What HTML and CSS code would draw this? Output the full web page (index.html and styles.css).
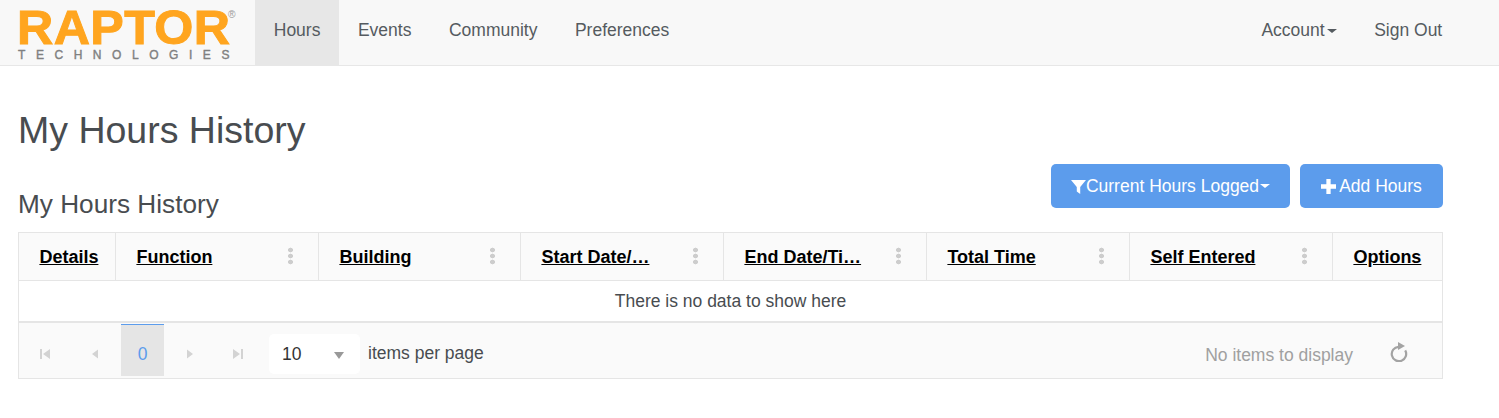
FILE: index.html
```html
<!DOCTYPE html>
<html lang="en">
<head>
    <meta charset="UTF-8">
    <meta name="viewport" content="width=device-width, initial-scale=1.0">
    <title>My Hours History</title>
    <link rel="stylesheet" href="styles.css">
</head>
<body>
    <nav class="navbar">
        <a class="brand" href="#">
            <span class="brand-name">RAPTOR<sup class="brand-reg">®</sup></span>
            <span class="brand-sub">TECHNOLOGIES</span>
        </a>
        <ul class="nav-list">
            <li><a class="active" href="#">Hours</a></li>
            <li><a href="#">Events</a></li>
            <li><a href="#">Community</a></li>
            <li><a href="#">Preferences</a></li>
        </ul>
        <ul class="nav-list nav-right">
            <li><a href="#">Account<span class="caret"></span></a></li>
            <li><a href="#">Sign Out</a></li>
        </ul>
    </nav>

    <main class="content">
        <h1>My Hours History</h1>
        <div class="toolbar">
            <h2>My Hours History</h2>
            <div class="toolbar-btns">
                <button class="btn" type="button">
                    <svg class="icon-filter" viewBox="0 0 14 14"><path d="M0 1h14L8.6 7.4V14L5.4 11.6V7.4z"/></svg>Current Hours Logged<span class="caret"></span>
                </button>
                <button class="btn btn-add" type="button">
                    <svg class="icon-plus" viewBox="0 0 14 14"><path d="M5 0h4v5h5v4H9v5H5V9H0V5h5z"/></svg>Add Hours
                </button>
            </div>
        </div>

        <div class="grid">
            <div class="grid-head">
                <div class="col col-details"><a href="#">Details</a></div>
                <div class="col"><a href="#">Function</a><span class="dots"></span></div>
                <div class="col"><a href="#">Building</a><span class="dots"></span></div>
                <div class="col"><a href="#">Start Date/…</a><span class="dots"></span></div>
                <div class="col"><a href="#">End Date/Ti…</a><span class="dots"></span></div>
                <div class="col"><a href="#">Total Time</a><span class="dots"></span></div>
                <div class="col"><a href="#">Self Entered</a><span class="dots"></span></div>
                <div class="col col-options"><a href="#">Options</a></div>
            </div>
            <div class="grid-empty">There is no data to show here</div>
            <div class="pager">
                <div class="pager-nav">
                    <svg class="pg" viewBox="0 0 12 12"><path d="M1 1h2v10H1zM11 1v10L4 6z"/></svg>
                    <svg class="pg" viewBox="0 0 12 12"><path d="M9 1.500v9L3 6z"/></svg>
                    <span class="pg-current">0</span>
                    <svg class="pg pg-next" viewBox="0 0 12 12"><path d="M3 1.500v9L9 6z"/></svg>
                    <svg class="pg pg-last" viewBox="0 0 12 12"><path d="M9 1h2v10H9zM1 1v10l7-5z"/></svg>
                </div>
                <div class="page-size"><span>10</span><span class="select-arrow"></span></div>
                <span class="per-page">items per page</span>
                <span class="pager-info">No items to display</span>
                <svg class="refresh" viewBox="0 0 20 20"><path d="M8.500 4.800A7.200 7.200 0 1 0 15.200 8.400" fill="none" stroke="#a3a3a3" stroke-width="2.200"/><path d="M8 0L15 4L8 8z" fill="#a3a3a3"/></svg>
            </div>
        </div>
    </main>
</body>
</html>
```

FILE: styles.css
```css
* { box-sizing: border-box; }
body { margin: 0; font-family: "Liberation Sans", Arial, sans-serif; font-size: 17.5px; color: #484c50; background-color: #fff; }
a { color: inherit; text-decoration: none; }
ul { list-style: none; margin: 0; padding: 0; }

.navbar { display: flex; height: 66px; padding: 0 38px 0 17px; background-color: #f8f8f8; border-bottom: 1px solid #e7e7e7; }
.brand { display: flex; flex-direction: column; width: 238px; padding-top: 9px; }
.brand-name { position: relative; display: block; height: 36px; font-size: 49px; line-height: 36px; font-weight: bold; color: #ffa51f; letter-spacing: 0.4px; -webkit-text-stroke: 1px #ffa51f; transform: scaleX(1.024); transform-origin: left; }
.brand-reg { position: absolute; top: 1px; left: 206px; font-size: 10px; line-height: 10px; font-weight: normal; letter-spacing: 0; color: #9a9a9a; -webkit-text-stroke: 0; }
.brand-sub { margin: 4px 0 0 1px; font-size: 12px; line-height: 12px; letter-spacing: 10.55px; color: #808080; -webkit-text-stroke: 0.4px #808080; white-space: nowrap; }

.nav-list { display: flex; }
.nav-list a { display: block; height: 65px; padding: 0 18.75px; line-height: 61px; color: #555b60; }
.nav-list a.active { background-color: #e7e7e7; }
.nav-right { margin-left: auto; }
.caret { display: inline-block; margin-left: 2px; vertical-align: middle; border-top: 4px solid; border-left: 5px solid transparent; border-right: 5px solid transparent; }

.content { padding: 0 56px 0 18px; }
h1 { margin: 0; padding-top: 41px; font-size: 37.5px; line-height: 46px; font-weight: normal; color: #484c50; }
.toolbar { display: flex; justify-content: space-between; height: 68px; margin-top: 11px; }
h2 { margin: 0; padding-top: 22px; font-size: 26.2px; line-height: 36px; font-weight: normal; color: #484c50; }
.toolbar-btns { display: flex; gap: 10px; }
.btn { display: flex; align-items: center; justify-content: center; width: 239px; height: 44px; padding: 0; border: none; border-radius: 5px; background-color: #5c9cec; color: #fff; font-family: inherit; font-size: 17.5px; }
.btn-add { width: 143px; }
.btn svg { fill: #fff; }
.icon-filter { width: 15px; height: 15px; }
.icon-plus { width: 15px; height: 15px; margin-right: 3px; }
.btn .caret { margin-left: 1px; }

.grid { border: 1px solid #e5e5e5; }
.grid-head { display: grid; grid-template-columns: 96px 203px 202px 203px 203px 203px 203px 1fr; height: 48px; background-color: #fafafa; border-bottom: 1px solid #e5e5e5; }
.col { display: flex; align-items: center; justify-content: space-between; padding: 2px 25px 0 20.4px; border-left: 1px solid #e5e5e5; font-size: 18px; font-weight: bold; color: #000; }
.col-details { border-left: none; }
.col-options { padding-right: 20px; }
.col a { text-decoration: underline; white-space: nowrap; }
.dots { width: 5px; height: 18px; margin-bottom: 3px; background-image: radial-gradient(circle, #cdcdcd 2.3px, transparent 2.6px); background-size: 5px 6px; }

.grid-empty { height: 40px; line-height: 40px; text-align: center; }
.pager { display: flex; align-items: center; height: 57px; padding-top: 7px; background-color: #fafafa; border-top: 2px solid #e5e5e5; }
.pager-nav { display: flex; align-items: center; align-self: stretch; padding-left: 1px; }
.pg { width: 12px; height: 12px; margin: 0 19px; fill: #d3d3d3; }
.pg-next { margin: 0 0 0 20px; }
.pg-last { margin: 0 0 0 36px; }
.pg-current { align-self: flex-start; width: 43px; height: 52px; margin: -6px 0 0 1px; line-height: 58px; text-align: center; background-color: #e5e5e5; border-top: 1px solid #5c9cec; color: #5c9cec; }
.page-size { display: flex; justify-content: space-between; align-items: center; width: 91px; height: 40px; margin-left: 25px; padding: 0 16px 0 13px; border-radius: 5px; background-color: #fff; color: #333; }
.select-arrow { margin-top: 2px; border-top: 7px solid #999; border-left: 5px solid transparent; border-right: 5px solid transparent; }
.per-page { margin-left: 8px; margin-bottom: 2px; }
.pager-info { margin-left: auto; margin-top: 2px; color: #a0a0a0; }
.refresh { width: 20px; height: 20px; margin: 0 32px 4px 37px; }
```
